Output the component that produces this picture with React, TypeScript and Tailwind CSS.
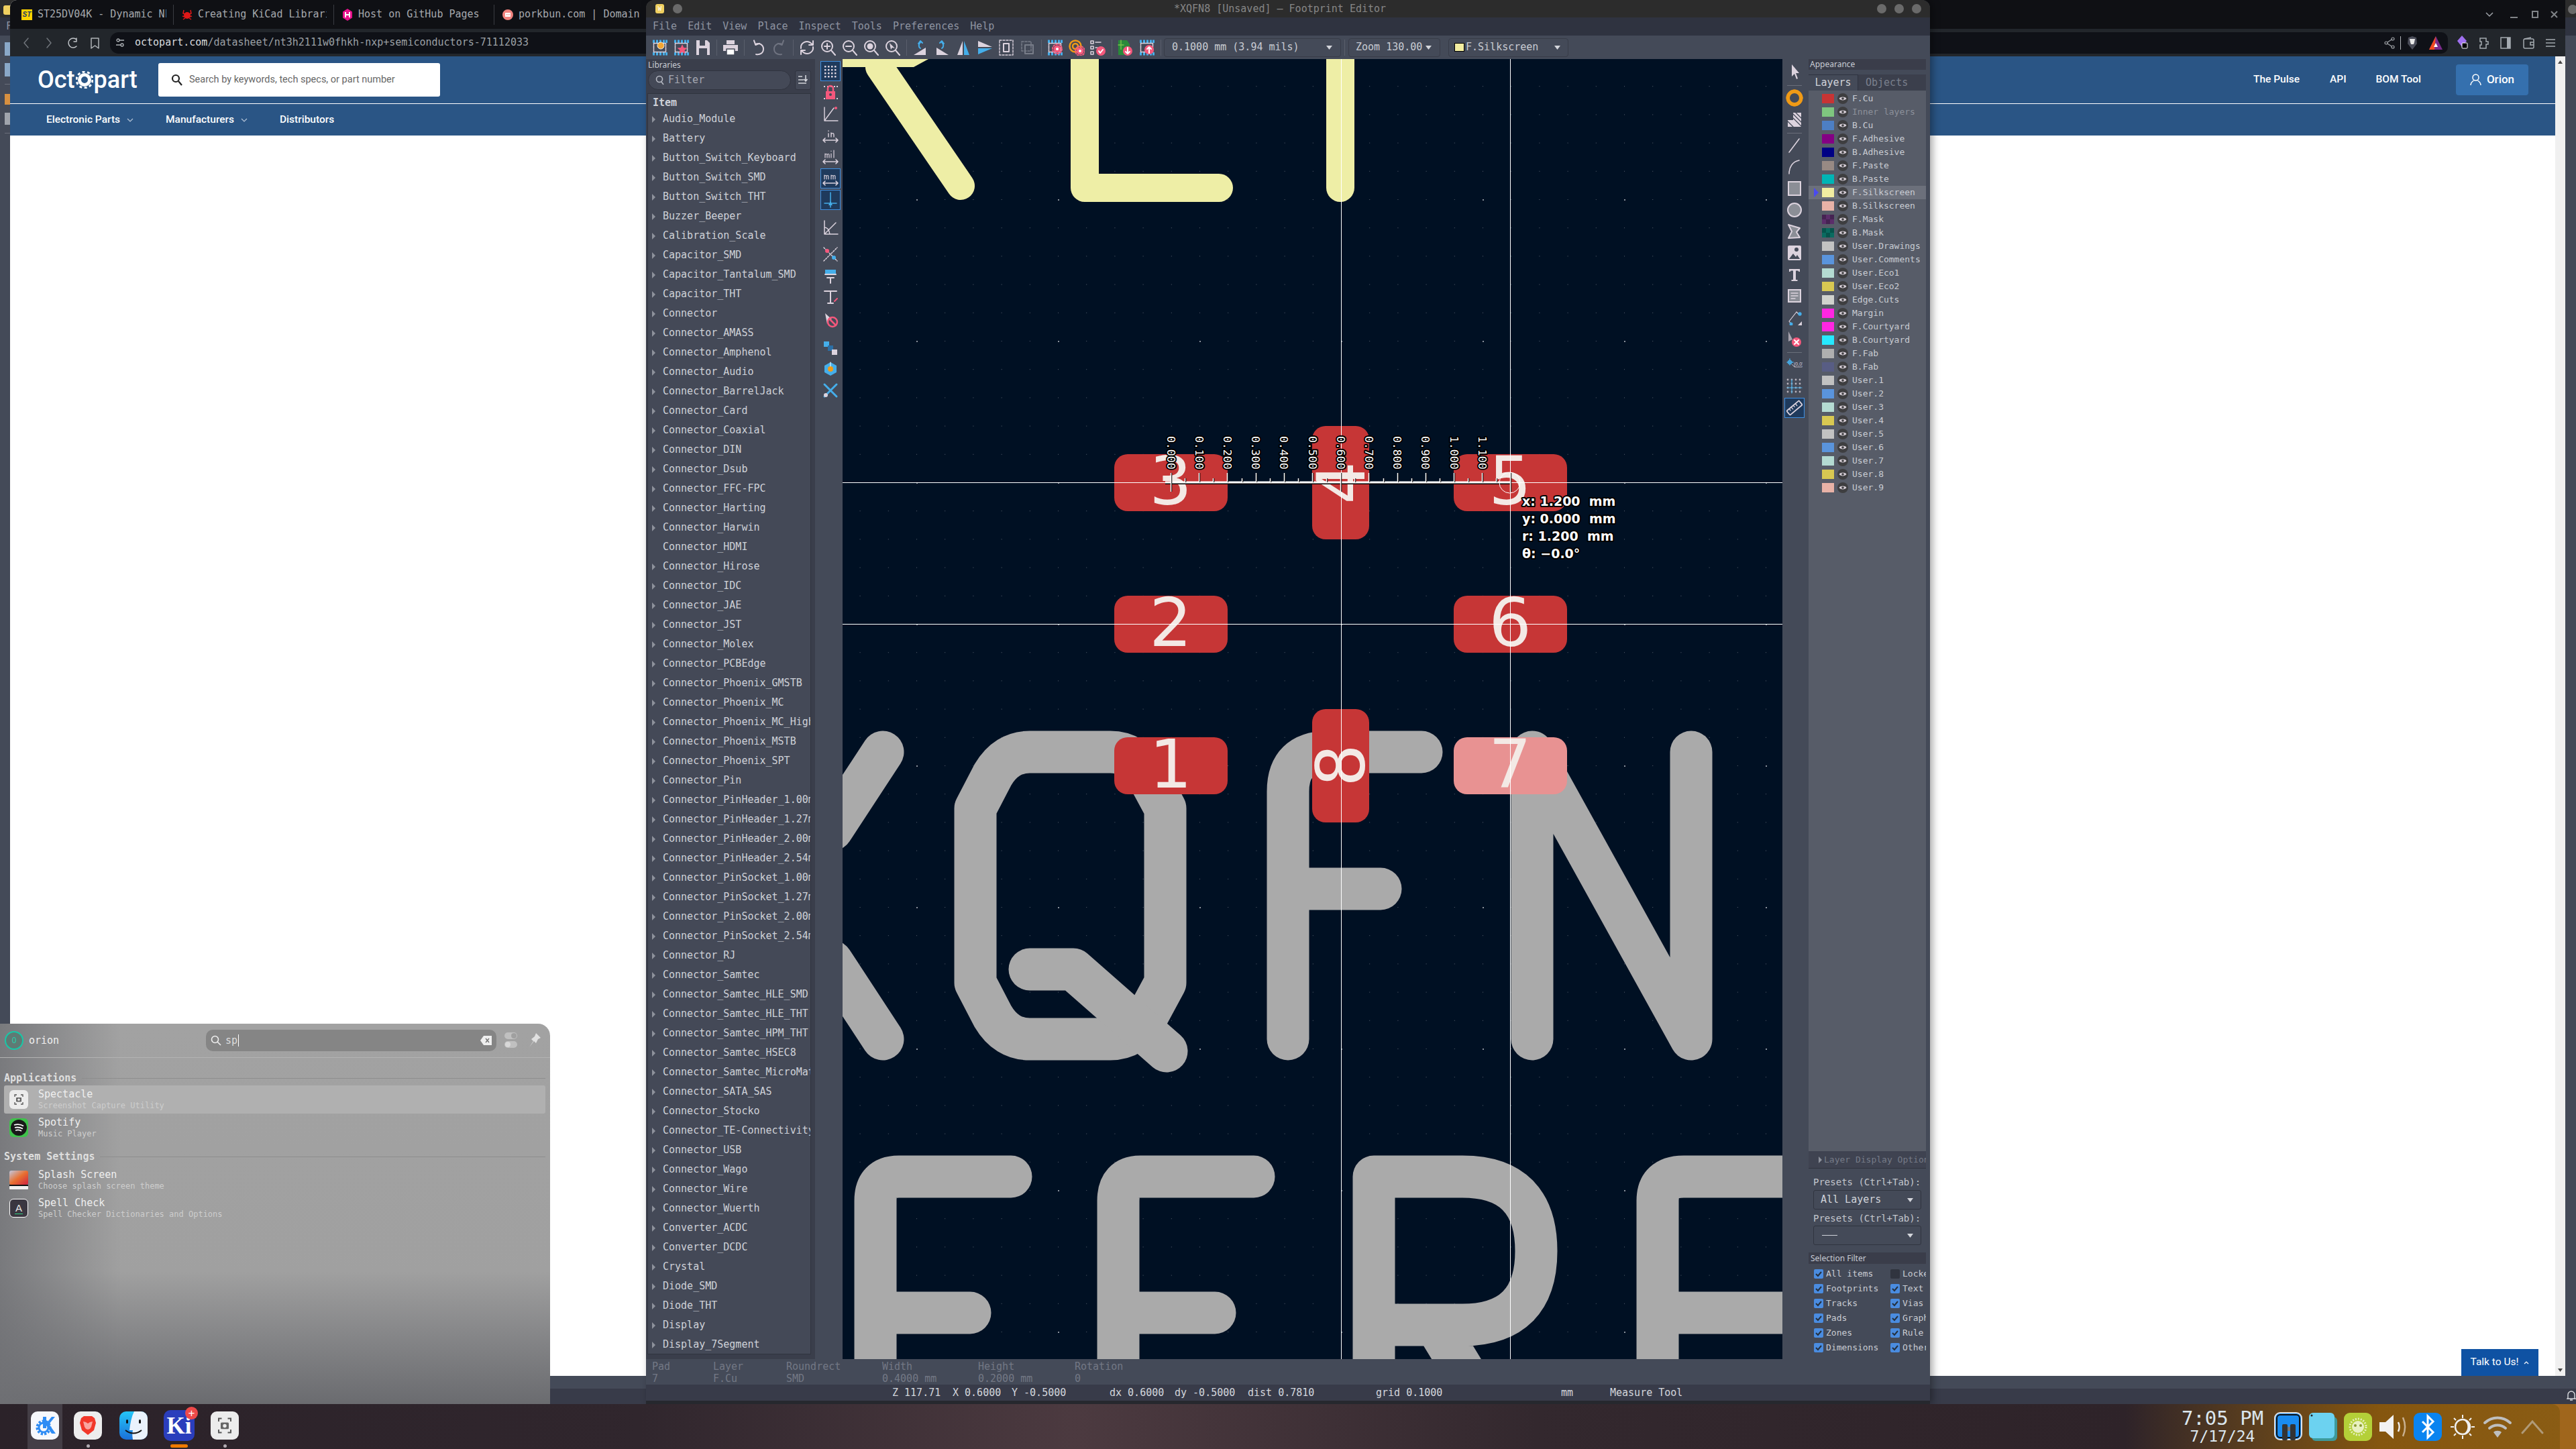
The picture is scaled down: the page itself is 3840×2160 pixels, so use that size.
import React from "react";

const S = "#dcd3de";
const B = "#45aeea";
const P = "#f4587c";

const Svg = ({ children, w = 24, h = 24, vb = "0 0 24 24" }: { children: React.ReactNode; w?: number; h?: number; vb?: string }) => (
  <svg width={w} height={h} viewBox={vb} fill="none" stroke={S} strokeWidth={2} strokeLinecap="round" strokeLinejoin="round">
    {children}
  </svg>
);

const ChipBase = () => (
  <g>
    {[1, 6, 11, 16, 20].map((x) => (
      <g key={x} stroke="none">
        <rect x={x} y={0.5} width={3} height={4.5} fill={B} />
        <rect x={x} y={19} width={3} height={4.5} fill={B} />
      </g>
    ))}
    <rect x={2.5} y={5.5} width={18} height={13} strokeWidth={1.5} strokeDasharray="5 1" />
  </g>
);

const Gear = ({ cx = 15, cy = 14, c = P }: { cx?: number; cy?: number; c?: string }) => (
  <g>
    <circle cx={cx} cy={cy} r={5.5} fill={c} stroke="none" />
    <circle cx={cx} cy={cy} r={7} stroke={c} strokeWidth={2} strokeDasharray="2 2.4" />
    <circle cx={cx} cy={cy} r={2} fill="#fff" stroke="none" />
  </g>
);

const Mag = ({ children }: { children?: React.ReactNode }) => (
  <Svg>
    <circle cx={10} cy={10} r={8} />
    <path d="M16 16l6 7" />
    {children}
  </Svg>
);

const topIcons: React.ReactNode[] = [
  <Svg key="a"><ChipBase /><circle cx={13} cy={9} r={5} fill="#f2a632" stroke="#fff" strokeWidth={1} strokeDasharray="1.5 1" /></Svg>,
  <Svg key="b"><ChipBase /><path d="M13 7l2.2 5 5.3.5-4 3.5 1.2 5.3-4.7-2.8-4.7 2.8 1.2-5.3-4-3.5 5.3-.5z" fill={P} stroke="none" /></Svg>,
  <Svg key="c"><path d="M2 1h16l4 4v18H2z" fill={S} stroke="none" /><rect x={7} y={1} width={8} height={8} fill="#444a58" stroke="none" /><rect x={6} y={13} width={12} height={10} fill="#444a58" stroke="none" /></Svg>,
  "|",
  <Svg key="d"><rect x={6} y={1} width={12} height={6} fill={S} stroke="none" /><path d="M1 8h22v9H1z" fill={S} stroke="none" /><rect x={6} y={14} width={12} height={9} fill="#fff" stroke="#444a58" strokeWidth={1.5} /></Svg>,
  "|",
  <Svg key="e"><path d="M8 7c6-3 12 1 12 7s-5 9-11 8" /><path d="M8 1v7h6" transform="rotate(-20 8 7)" /></Svg>,
  <Svg key="f"><g stroke="#6f7380"><path d="M16 7c-6-3-12 1-12 7s5 9 11 8" /><path d="M16 1v7h-6" transform="rotate(20 16 7)" /></g></Svg>,
  "|",
  <Svg key="g"><path d="M3 13C2 6 9 1 16 4l4 3" /><path d="M21 2v6h-6" /><path d="M21 11c1 7-6 12-13 9l-4-3" /><path d="M3 22v-6h6" /></Svg>,
  <Mag key="h"><path d="M10 6v8M6 10h8" /></Mag>,
  <Mag key="i"><path d="M6 10h8" /></Mag>,
  <Mag key="j"><circle cx={10} cy={10} r={4.5} fill={S} stroke="none" /></Mag>,
  <Mag key="k"><path d="M7 5l2 10 2-3 4 1z" fill={S} stroke="none" /></Mag>,
  "|",
  <Svg key="l"><path d="M2 23l18-11v11z" fill={S} stroke="none" /><path d="M12 13c-3-2-3-6 0-9M9 6l3-4 3 3" stroke={B} /></Svg>,
  <Svg key="m"><path d="M22 23L4 12v11z" fill={S} stroke="none" /><path d="M12 13c3-2 3-6 0-9M15 6l-3-4-3 3" stroke={B} /></Svg>,
  <Svg key="n"><path d="M11 2v21H3z" fill={S} stroke="none" /><path d="M13 2v21h8z" fill={B} stroke="none" /></Svg>,
  <Svg key="o"><path d="M2 11h21L2 2z" fill={S} stroke="none" /><path d="M2 13h21L2 22z" fill={B} stroke="none" /></Svg>,
  <Svg key="p"><rect x={2} y={1} width={20} height={22} strokeWidth={1.4} strokeDasharray="3 2" /><rect x={8} y={6} width={8} height={12} /></Svg>,
  <Svg key="q"><g stroke="#777c88"><rect x={3} y={3} width={14} height={14} strokeWidth={1.5} strokeDasharray="3 2" /><rect x={8} y={8} width={12} height={13} /></g></Svg>,
  "|",
  <Svg key="r"><ChipBase /><Gear /></Svg>,
  <Svg key="s"><circle cx={10} cy={10} r={8.5} stroke="#f09a16" strokeWidth={2.5} /><circle cx={10} cy={10} r={4} stroke="#f09a16" strokeWidth={2.5} /><Gear cx={17} cy={17} /></Svg>,
  <Svg key="t"><g strokeWidth={1.5}><rect x={1} y={2} width={4} height={4} /><rect x={1} y={10} width={4} height={4} /><rect x={1} y={18} width={4} height={4} /><path d="M8 4h8M8 12h3" /></g><circle cx={16} cy={17} r={7} fill={P} stroke="none" /><path d="M13 17l2 3 4-5" stroke="#fff" /></Svg>,
  "|",
  <Svg key="u"><path d="M1 1h13l4 6v8H1z" fill="#2a8a3a" stroke="none" /><path d="M1 8h8M5 1v20" stroke="#78c24a" strokeWidth={1.4} /><rect x={1} y={15} width={10} height={8} fill="#2a8a3a" stroke="none" /><circle cx={15} cy={17} r={7} fill={P} stroke="none" /><path d="M15 12v9M12 18l3 3 3-3" stroke="#fff" /></Svg>,
  <Svg key="v"><ChipBase /><circle cx={15} cy={15} r={7} fill={P} stroke="none" /><path d="M15 20v-9M12 14l3-3 3 3" stroke="#fff" /></Svg>,
  "|",
];

const leftTools: { n: React.ReactNode; on?: boolean; mt?: number }[] = [
  { on: true, n: <Svg><g fill={S} stroke="none">{[4, 9, 14, 19].flatMap((y) => [3, 8, 13, 18].map((x) => <rect key={x + "-" + y} x={x} y={y} width={2.5} height={2.5} />))}</g></Svg> },
  { n: <Svg><g fill={S} stroke="none">{[2, 20].flatMap((y) => [2, 7, 12, 17, 21].map((x) => <rect key={x + "-" + y} x={x} y={y} width={2} height={2} />))}</g><rect x={5} y={10} width={14} height={12} fill={P} stroke="none" /><path d="M8 10V6a4 4 0 018 0v4" stroke={P} strokeWidth={2.5} /><circle cx={12} cy={15} r={2} fill="#444a58" stroke="none" /></Svg> },
  { n: <Svg><path d="M3 2v20h20M3 22L17 3" strokeWidth={1.4} /><circle cx={20} cy={3} r={2} fill={P} stroke="none" /></Svg> },
  { n: <Svg><path d="M1 19h22M1 19l3-3M1 19l3 3M23 19l-3-3M23 19l-3 3" strokeWidth={1.6} /><path d="M9 14V9M9 5v.5M13 14V8M13 10c2-2 4-2 4 1v3" strokeWidth={1.4} /></Svg> },
  { n: <Svg><path d="M1 19h22M1 19l3-3M1 19l3 3M23 19l-3-3M23 19l-3 3" strokeWidth={1.6} /><path d="M4 13V7M4 9c1-2 3-2 3 0v4M7 9c1-2 3-2 3 0v4M13 13V7M13 3v.5M17 13V2" strokeWidth={1.2} /></Svg> },
  { on: true, n: <Svg><path d="M1 19h22M1 19l3-3M1 19l3 3M23 19l-3-3M23 19l-3 3" strokeWidth={1.6} /><path d="M3 13V7M3 9c1-2 3-2 3 0v4M6 9c1-2 3-2 3 0v4M13 13V7M13 9c1-2 3-2 3 0v4M16 9c1-2 3-2 3 0v4" strokeWidth={1.2} /></Svg> },
  { on: true, n: <Svg><path d="M12 1v22M3 17h18" stroke={B} strokeWidth={1.5} /><path d="M12 14l3 6H9z" fill={B} stroke="none" /></Svg> },
  { mt: 9, n: <Svg><path d="M3 2v20h20M3 22L20 5M3 12c4 0 7 4 8 10" strokeWidth={1.5} /></Svg> },
  { mt: 8, n: <Svg><g strokeWidth={1.5} strokeDasharray="2 2"><path d="M2 22L22 2M2 2l20 20" stroke={S} /></g><circle cx={7} cy={7} r={3} fill={P} stroke="none" /><circle cx={17} cy={17} r={3} fill={B} stroke="none" /></Svg> },
  { n: <Svg><g fill={B} stroke="none"><rect x={4} y={3} width={16} height={7} /></g><path d="M7 15h10M12 15v8M4 10h16" /></Svg> },
  { n: <Svg><path d="M3 3h18M12 3v18M8 21h8" /><path d="M18 18l4-4" stroke={P} /></Svg> },
  { mt: 2, n: <Svg><path d="M4 2l10 9-6 1-1 6z" fill={S} stroke="none" /><circle cx={15} cy={15} r={7} fill="none" stroke={P} strokeWidth={2.5} /><path d="M10 10l10 10" stroke={P} strokeWidth={2.5} /></Svg> },
  { mt: 9, n: <Svg><rect x={2} y={3} width={8} height={8} fill={B} stroke="none" /><rect x={8} y={9} width={8} height={8} fill="#2c6fa5" stroke="none" /><rect x={14} y={15} width={8} height={8} fill={S} stroke="none" /></Svg> },
  { n: <Svg><path d="M12 2l9 5v10l-9 5-9-5V7z" fill={B} stroke="none" /><circle cx={12} cy={12} r={4} fill="#f09a16" stroke="none" /><path d="M12 2v6" stroke="#fff" strokeWidth={1} /></Svg> },
  { n: <Svg><path d="M3 3l18 18M21 3L3 21" stroke={B} strokeWidth={3} /><circle cx={5} cy={19} r={3} fill={S} stroke="none" /></Svg> },
];

const rightTools: { n: React.ReactNode; sep?: boolean; on?: boolean }[] = [
  { n: <Svg><path d="M8 1l0 18 4-4 3 8 2-1-3-8h5z" fill={S} stroke="none" /></Svg> },
  { sep: true, n: null },
  { n: <Svg w={26} h={26}><circle cx={12} cy={12} r={9} stroke="#f09a16" strokeWidth={5} /><circle cx={12} cy={12} r={11.2} stroke="#f09a16" strokeWidth={0.8} /></Svg> },
  { n: <Svg><rect x={2} y={13} width={8} height={10} fill={S} stroke="none" /><rect x={10} y={2} width={12} height={21} fill={S} stroke="none" /><path d="M10 4l12 12M10 10l12 12M14 2l8 8M2 15l8 8" stroke="#444a58" strokeWidth={1.3} /></Svg> },
  { sep: true, n: null },
  { n: <Svg><path d="M4 22L19 2" strokeWidth={1.6} /></Svg> },
  { n: <Svg><path d="M4 22C4 12 9 4 19 2" strokeWidth={1.6} /></Svg> },
  { n: <Svg><rect x={3} y={2} width={18} height={20} fill="#8b8e96" stroke={S} strokeWidth={2} strokeLinejoin="miter" /></Svg> },
  { n: <Svg><circle cx={12} cy={12} r={10} fill="#8b8e96" stroke={S} strokeWidth={2} /></Svg> },
  { n: <Svg><path d="M3 2l17 5-5 6 5 8-17 1 5-10z" fill="#8b8e96" stroke={S} strokeWidth={2} /></Svg> },
  { n: <Svg><rect x={2} y={1} width={20} height={22} rx={2} fill={S} stroke="none" /><path d="M4 21l6-8 4 5 2-3 4 6z" fill="#444a58" stroke="none" /><circle cx={15} cy={7} r={3} fill="#444a58" stroke="none" /></Svg> },
  { n: <Svg><path d="M4 4h16v4h-1.5l-1-1.5H14V20h2.5v2h-9v-2H10V6.500H6.500l-1 1.500H4z" fill={S} stroke="none" /></Svg> },
  { n: <Svg><rect x={3} y={3} width={18} height={18} fill="#8b8e96" stroke={S} strokeWidth={2} strokeLinejoin="miter" /><path d="M7 8h10M7 12h10M7 16h6" stroke={S} strokeWidth={1.4} /></Svg> },
  { n: <Svg><path d="M4 18L15 4M15 4l4 4M4 18l3 4" strokeWidth={1.2} /><circle cx={20} cy={7} r={2.7} fill={B} stroke="none" /><circle cx={7} cy={22} r={2.5} fill={B} stroke="none" /><path d="M17 24l6-6v6z" fill={S} stroke="none" /></Svg> },
  { n: <Svg><path d="M3 1l0 15 6-3 3 6z" fill="#a8a3ae" stroke="none" /><circle cx={15} cy={17} r={7} fill={P} stroke="none" /><path d="M12 14l6 6M18 14l-6 6" stroke="#fff" strokeWidth={2} /></Svg> },
  { sep: true, n: null },
  { n: <Svg><path d="M1 8h9M5 3v9" stroke={B} strokeWidth={1.4} /><circle cx={5} cy={8} r={2.5} stroke={B} strokeWidth={1.4} /><path d="M8 11l4 4h11" strokeWidth={0.8} /><text x={11} y={13} fontSize={7} fill={S} stroke="none" fontFamily="'Liberation Sans',sans-serif">(0,0)</text></Svg> },
  { n: <Svg><g fill="#b8b2bc" stroke="none">{[2, 8, 14, 20].flatMap((y) => [2, 8, 14, 20].map((x) => <circle key={x + "-" + y} cx={x} cy={y} r={1.4} />))}</g><path d="M8 2v20M1 14h22" stroke={B} strokeWidth={1.2} /></Svg> },
  { on: true, n: <Svg><g transform="rotate(-40 12 12)"><rect x={0} y={8} width={24} height={8} rx={1} strokeWidth={1.8} /><path d="M5 8v3M9 8v4M13 8v3M17 8v4" strokeWidth={1.3} /></g></Svg> },
];

const libs = ["Audio_Module", "Battery", "Button_Switch_Keyboard", "Button_Switch_SMD", "Button_Switch_THT", "Buzzer_Beeper", "Calibration_Scale", "Capacitor_SMD", "Capacitor_Tantalum_SMD", "Capacitor_THT", "Connector", "Connector_AMASS", "Connector_Amphenol", "Connector_Audio", "Connector_BarrelJack", "Connector_Card", "Connector_Coaxial", "Connector_DIN", "Connector_Dsub", "Connector_FFC-FPC", "Connector_Harting", "Connector_Harwin", "Connector_HDMI", "Connector_Hirose", "Connector_IDC", "Connector_JAE", "Connector_JST", "Connector_Molex", "Connector_PCBEdge", "Connector_Phoenix_GMSTB", "Connector_Phoenix_MC", "Connector_Phoenix_MC_High", "Connector_Phoenix_MSTB", "Connector_Phoenix_SPT", "Connector_Pin", "Connector_PinHeader_1.00m", "Connector_PinHeader_1.27m", "Connector_PinHeader_2.00m", "Connector_PinHeader_2.54m", "Connector_PinSocket_1.00m", "Connector_PinSocket_1.27m", "Connector_PinSocket_2.00m", "Connector_PinSocket_2.54m", "Connector_RJ", "Connector_Samtec", "Connector_Samtec_HLE_SMD", "Connector_Samtec_HLE_THT", "Connector_Samtec_HPM_THT", "Connector_Samtec_HSEC8", "Connector_Samtec_MicroMate", "Connector_SATA_SAS", "Connector_Stocko", "Connector_TE-Connectivity", "Connector_USB", "Connector_Wago", "Connector_Wire", "Connector_Wuerth", "Converter_ACDC", "Converter_DCDC", "Crystal", "Diode_SMD", "Diode_THT", "Display", "Display_7Segment"];

const layers: [string, string][] = [["F.Cu", "#c83434"], ["Inner layers", "#7fc67f"], ["B.Cu", "#4d7fc4"], ["F.Adhesive", "#840084"], ["B.Adhesive", "#000084"], ["F.Paste", "#988a84"], ["B.Paste", "#00b5b5"], ["F.Silkscreen", "#f2eda1"], ["B.Silkscreen", "#e8b2a7"], ["F.Mask", "mask1"], ["B.Mask", "mask2"], ["User.Drawings", "#c2c2c2"], ["User.Comments", "#5a94dc"], ["User.Eco1", "#b4dbd2"], ["User.Eco2", "#d8c852"], ["Edge.Cuts", "#d0d2cd"], ["Margin", "#ff26e2"], ["F.Courtyard", "#ff26e2"], ["B.Courtyard", "#26e9ff"], ["F.Fab", "#afafaf"], ["B.Fab", "#585d84"], ["User.1", "#c2c2c2"], ["User.2", "#5a94dc"], ["User.3", "#b4dbd2"], ["User.4", "#d8c852"], ["User.5", "#c2c2c2"], ["User.6", "#5a94dc"], ["User.7", "#b4dbd2"], ["User.8", "#d8c852"], ["User.9", "#e8b2a7"]];

const Eye = () => (
  <svg width={16} height={16} viewBox="0 0 16 16" className="shrink-0">
    <circle cx={8} cy={8} r={8} fill="#3e3e40" />
    <path d="M2.500 8C4.500 4.800 11.500 4.800 13.500 8 11.500 11.200 4.500 11.200 2.500 8z" fill="#d6ced6" />
    <circle cx={8} cy={8} r={1.8} fill="#3e3e40" />
  </svg>
);

const Caret = ({ c = "#d4d6dc" }: { c?: string }) => (
  <svg width={9} height={6} viewBox="0 0 9 6" className="shrink-0"><path d="M0 0h9L4.500 6z" fill={c} /></svg>
);

const Swatch = ({ c }: { c: string }) => {
  if (c === "mask1" || c === "mask2") {
    const a = c === "mask1" ? "#5b2d6a" : "#0a6b60";
    const b = c === "mask1" ? "#452352" : "#07544c";
    return (
      <svg width={18} height={14} className="shrink-0"><rect width={18} height={14} fill={a} /><rect x={0} y={0} width={6} height={7} fill={b} /><rect x={12} y={0} width={6} height={7} fill={b} /><rect x={6} y={7} width={6} height={7} fill={b} /></svg>
    );
  }
  return <span className="block h-[14px] w-[18px] shrink-0" style={{ background: c }} />;
};

const Check = ({ on = true }: { on?: boolean }) => (
  <svg width={14} height={14} viewBox="0 0 14 14" className="shrink-0">
    <rect width={14} height={14} rx={2} fill={on ? "#4a8ce0" : "#30343f"} />
    {on && <path d="M3 7l3 3 5-6" fill="none" stroke="#24303f" strokeWidth={2} />}
  </svg>
);

const filt: [string, boolean, string, boolean][] = [["All items", true, "Locked items", false], ["Footprints", true, "Text", true], ["Tracks", true, "Vias", true], ["Pads", true, "Graphics", true], ["Zones", true, "Rule Areas", true], ["Dimensions", true, "Other items", true]];

const Canvas = () => {
  const ux = 42.2;
  const x0 = 1745;
  const pad = "#c63636";
  const ticks = Array.from({ length: 25 }, (_, i) => i);
  const labels = Array.from({ length: 12 }, (_, i) => i);
  const digit = (t: string, x: number, y: number, rot = 0) => (
    <text x={x} y={y} textAnchor="middle" dominantBaseline="central" fontSize={100} fill="#f3e9e5" fontFamily="'DejaVu Sans',sans-serif" transform={rot ? `rotate(${rot} ${x} ${y})` : undefined}>{t}</text>
  );
  const outline = { paintOrder: "stroke" as const, stroke: "#000", strokeWidth: 4, strokeLinejoin: "round" as const };
  return (
    <svg width={1401} height={1938} viewBox="1256 88 1401 1938" className="block">
      <defs>
        <pattern id="g1" patternUnits="userSpaceOnUse" x={1999} y={719} width={ux} height={ux}>
          <rect width={1} height={1} fill="#56606c" />
        </pattern>
        <pattern id="g2" patternUnits="userSpaceOnUse" x={1999} y={719} width={ux * 5} height={ux * 5}>
          <rect width={2} height={2} fill="#8a929c" />
        </pattern>
      </defs>
      <rect x={1256} y={88} width={1401} height={1938} fill="#001023" />
      <rect x={1256} y={88} width={1401} height={1938} fill="url(#g1)" />
      <rect x={1256} y={88} width={1401} height={1938} fill="url(#g2)" />

      <g fill="none" stroke="#aaaaaa" strokeWidth={63} strokeLinecap="round" strokeLinejoin="round">
        <path d="M1316 1121L1240 1237M1316 1549L1240 1433" />
        <path d="M1535 1121H1655Q1690 1121 1710 1155L1737 1205V1465L1710 1515Q1690 1549 1655 1549H1535Q1500 1549 1480 1515L1454 1465V1205L1480 1155Q1500 1121 1535 1121Z" />
        <path d="M1535 1445H1600L1739 1567" />
        <path d="M1920 1549V1180Q1920 1121 1980 1121H2119M1920 1325H2058" />
        <path d="M2284 1549V1121L2521 1549V1121" />
        <path d="M1305 2080V1790Q1305 1754 1340 1754H1507M1305 1957H1446" />
        <path d="M1667 2080V1790Q1667 1754 1700 1754H1869M1667 1957H1811" />
        <path d="M2048 2080V1754H2180Q2290 1754 2290 1865Q2290 1975 2180 1975H2048M2140 1975L2210 2090" />
        <path d="M2471 2080V1790Q2471 1754 2510 1754H2700M2471 1957H2700" />
      </g>
      <g fill="none" stroke="#eeeea6" strokeWidth={42} strokeLinecap="round" strokeLinejoin="round">
        <path d="M1311 100L1432 277" />
        <path d="M1617 70V280H1817" />
        <path d="M1998 70V280" />
      </g>
      <path d="M1256 88H1384L1362 100H1256Z" fill="#eeeea6" />

      <g fill={pad}>
        <rect x={1661} y={677} width={169} height={85} rx={20} />
        <rect x={2167} y={677} width={169} height={85} rx={20} />
        <rect x={1956} y={635} width={85} height={169} rx={20} />
        <rect x={1661} y={888} width={169} height={85} rx={20} />
        <rect x={2167} y={888} width={169} height={85} rx={20} />
        <rect x={1661} y={1099} width={169} height={85} rx={20} />
        <rect x={1956} y={1057} width={85} height={169} rx={20} />
      </g>
      <rect x={2167} y={1099} width={169} height={85} rx={20} fill="#e89292" />
      {digit("3", 1745, 717)}
      {digit("5", 2251, 717)}
      {digit("4", 1999, 720, -90)}
      {digit("2", 1745, 928)}
      {digit("6", 2251, 928)}
      {digit("1", 1745, 1139)}
      {digit("7", 2251, 1139)}
      {digit("8", 1999, 1141, -90)}

      <g stroke="#fff" strokeWidth={1}>
        <path d="M1256 719.500H2657M1256 930.500H2657M1999.500 88V2026M2251.500 88V2026" />
      </g>

      <path d="M1737 721H2251" stroke="#000" strokeWidth={2} />
      <path d="M1737 719H2251" stroke="#fff" strokeWidth={3} />
      {ticks.map((i) => {
        const x = Math.round(x0 + i * ux / 2) + 0.5;
        const big = i % 12 === 0;
        const maj = i % 2 === 0;
        return (
          <g key={i}>
            <path d={`M${x + 1} ${maj ? 705 : 713}V${big ? 733 : 719}`} stroke="#000" strokeWidth={1.5} />
            <path d={`M${x} ${maj ? 705 : 713}V${big ? 733 : 719}`} stroke="#fff" strokeWidth={1.5} />
          </g>
        );
      })}
      {labels.map((i) => {
        const x = x0 + i * ux;
        const t = (i / 10).toFixed(3);
        return (
          <text key={i} x={x} y={650} fontSize={16.500} fill="#fff" dominantBaseline="central" fontFamily="'DejaVu Sans Mono',monospace" transform={`rotate(90 ${x} 650)`} style={outline}>{t}</text>
        );
      })}
      <circle cx={2250.500} cy={719.500} r={15.500} fill="none" stroke="#fff" strokeWidth={1} />
      {["x: 1.200  mm", "y: 0.000  mm", "r: 1.200  mm", "θ: −0.0°"].map((t, i) => (
        <text key={t} x={2269} y={[747, 773, 799, 825][i]} fontSize={19} fontWeight={700} xmlSpace="preserve" fill="#fff" dominantBaseline="central" fontFamily="'DejaVu Sans',sans-serif" style={outline}>{t}</text>
      ))}
    </svg>
  );
};

const KiCadWindow = () => (
  <div className="absolute left-[963px] top-0 z-20 flex h-[2093px] w-[1914px] flex-col overflow-hidden rounded-t-[12px] bg-[#353946] text-[15px] shadow-[4px_0_12px_rgba(0,0,0,0.35)]">
    <div className="relative flex h-[26px] shrink-0 items-center bg-[#2c2c2c] pl-[14px]">
      <span className="flex h-[14px] w-[13px] items-center justify-center rounded-[3px] bg-[#f0d060] text-[9px] leading-none text-[#fff]">W</span>
      <span className="ml-[13px] h-[14px] w-[14px] rounded-full bg-[#6a6a6a]" />
      <span className="absolute left-[787px] text-[#868686]">*XQFN8 [Unsaved] — Footprint Editor</span>
      <div className="ml-auto flex gap-[12px] pr-[13px]">
        <span className="h-[14px] w-[14px] rounded-full bg-[#6a6a6a]" />
        <span className="h-[14px] w-[14px] rounded-full bg-[#6a6a6a]" />
        <span className="h-[14px] w-[14px] rounded-full bg-[#6a6a6a]" />
      </div>
    </div>
    <div className="flex h-[27px] shrink-0 items-center gap-[16px] bg-[#2f3340] pl-[10px] text-[#8e93a0]">
      {["File", "Edit", "View", "Place", "Inspect", "Tools", "Preferences", "Help"].map((m) => (
        <span key={m}>{m}</span>
      ))}
    </div>
    <div className="flex h-[35px] shrink-0 items-center bg-[#444a58] pl-[5px] text-[#c8cbd2]">
      {topIcons.map((n, i) =>
        n === "|" ? (
          <span key={i} className="flex w-[9px] justify-center"><span className="h-[24px] w-px bg-[#5a5f6c]" /></span>
        ) : (
          <span key={i} className="flex w-[32px] justify-center">{n}</span>
        )
      )}
      <div className="flex h-[28px] w-[264px] items-center justify-between rounded-[4px] border border-[#383c48] pl-[11px] pr-[12px]">
        <span>0.1000 mm (3.94 mils)</span><Caret />
      </div>
      <span className="flex w-[11px] justify-center"><span className="h-[24px] w-px bg-[#5a5f6c]" /></span>
      <div className="flex h-[28px] w-[137px] items-center gap-[5px] rounded-[4px] border border-[#383c48] pl-[10px]">
        <span>Zoom 130.00</span><Caret />
      </div>
      <div className="ml-[12px] flex h-[28px] w-[179px] items-center rounded-[4px] border border-[#383c48] pl-[8px] pr-[11px]">
        <span className="h-[13px] w-[15px] border border-black bg-[#f2eda1]" />
        <span className="ml-[2px]">F.Silkscreen</span>
        <span className="ml-auto"><Caret /></span>
      </div>
    </div>

    <div className="flex h-[1938px] shrink-0">
      <div className="flex w-[252px] shrink-0 flex-col bg-[#3a3e4b] pl-[2px] pr-[6px]">
        <div className="flex h-[17px] shrink-0 items-center pl-[1px] font-['Noto_Sans',sans-serif] text-[12px] text-[#c8ccd4]">Libraries</div>
        <div className="flex h-[29px] shrink-0 items-center gap-[6px] pl-px">
          <div className="flex h-full w-[214px] items-center gap-[6px] rounded-full border border-[#30343f] bg-[#444957] pl-[10px] text-[#a4a8b2]">
            <svg width={13} height={15} viewBox="0 0 13 15" fill="none" stroke="#b8bbc4" strokeWidth={1.6}><circle cx={6} cy={6} r={4.500} /><path d="M9 10l3 4" /></svg>
            <span>Filter</span>
          </div>
          <div className="flex h-full w-[24px] items-center justify-center rounded-[3px] border border-[#30343f] bg-[#444957]">
            <svg width={14} height={18} viewBox="0 0 14 18" fill="none" stroke="#d4d6dc" strokeWidth={1.6}><path d="M0 3h6M0 8h8M0 13h12M11 1v9M8.500 7l2.500 3 2.500-3" /></svg>
          </div>
        </div>
        <div className="mb-[7px] mt-[5px] flex min-h-0 flex-1 flex-col overflow-hidden border border-[#30343f] bg-[#444957] pl-[6px] pt-[3px] text-[#ced1d8]">
          <div className="flex h-[20px] shrink-0 items-center pl-px font-bold">Item</div>
          <div className="flex flex-col">
            {libs.map((l) => (
              <div key={l} className="flex h-[29px] shrink-0 items-center whitespace-nowrap">
                <span className="w-[16px] shrink-0">
                  {l !== "Connector_HDMI" && <svg width={5} height={10} viewBox="0 0 5 10"><path d="M0 0l5 5-5 5z" fill="#8e929c" /></svg>}
                </span>
                <span>{l}</span>
              </div>
            ))}
          </div>
        </div>
      </div>

      <div className="flex w-[41px] shrink-0 flex-col items-center bg-[#444a58] pl-[4px] pt-[3px]">
        {leftTools.map((t, i) => (
          <span
            key={i}
            className={t.on ? "flex h-[30px] w-[30px] shrink-0 items-center justify-center border border-[#3f8fe0] bg-[#1f3a5c]" : "flex h-[30px] w-[30px] shrink-0 items-center justify-center"}
            style={{ marginBottom: 2, marginTop: t.mt ?? 0 }}
          >
            {t.n}
          </span>
        ))}
      </div>

      <div className="h-full w-[1401px] shrink-0 overflow-hidden"><Canvas /></div>

      <div className="flex w-[39px] shrink-0 flex-col items-center bg-[#444a58] pr-[4px] pt-[4px]">
        {rightTools.map((t, i) =>
          t.sep ? (
            <span key={i} className="my-[3px] block h-px w-[22px] shrink-0 bg-[#6a6f7b]" />
          ) : (
            <span key={i} className={t.on ? "flex h-[30px] w-[30px] shrink-0 items-center justify-center border border-[#3f8fe0] bg-[#1f3a5c]" : "flex h-[30px] w-[30px] shrink-0 items-center justify-center"} style={{ marginBottom: 2 }}>
              {t.n}
            </span>
          )
        )}
      </div>

      <div className="flex w-[181px] shrink-0 flex-col bg-[#444a58] pr-[6px]">
        <div className="flex h-[16px] shrink-0 items-center bg-[#3a3d4a] pl-[2px] font-['Noto_Sans',sans-serif] text-[12px] text-[#c8ccd4]">Appearance</div>
        <div className="mt-[7px] flex h-[24px] shrink-0 items-center bg-[#3b3f4c]">
          <span className="flex h-full w-[74px] items-center justify-center border-r border-t border-[#2f3340] bg-[#444a58] text-[#d0d3da]">Layers</span>
          <span className="pl-[11px] text-[#7a7f8c]">Objects</span>
        </div>
        <div className="flex min-h-0 flex-1 flex-col overflow-hidden bg-[#575c68] pt-[2px] text-[13px] text-[#c9ccd3]">
          {layers.map(([n, c]) => {
            const sel = n === "F.Silkscreen";
            return (
              <div key={n} className={sel ? "flex h-[20px] shrink-0 items-center gap-[5px] bg-[#6c707b]" : "flex h-[20px] shrink-0 items-center gap-[5px]"}>
                <span className="flex w-[15px] shrink-0 justify-end">
                  {sel && <svg width={7} height={14} viewBox="0 0 7 14"><path d="M0 0l7 7-7 7z" fill="#4a4af0" /></svg>}
                </span>
                <Swatch c={c} />
                <Eye />
                <span className={n === "Inner layers" ? "ml-[1px] whitespace-nowrap text-[#8c909a]" : "ml-[1px] whitespace-nowrap"}>{n}</span>
              </div>
            );
          })}
        </div>
        <div className="flex h-[26px] shrink-0 items-center gap-[3px] overflow-hidden whitespace-nowrap border-b border-[#30343f] bg-[#3f4351] pl-[15px] text-[13px] text-[#767b88]">
          <svg width={5} height={10} viewBox="0 0 5 10" className="shrink-0"><path d="M0 0l5 5-5 5z" fill="#8e929c" /></svg>
          <span>Layer Display Options</span>
        </div>
        <div className="flex shrink-0 flex-col px-[7px] pt-[12px] text-[#c3c6cd]">
          <span className="text-[14px] leading-[16px]">Presets (Ctrl+Tab):</span>
          <div className="mt-[4px] flex h-[29px] items-center justify-between rounded-[3px] border border-[#30343f] pl-[10px] pr-[11px] text-[#d0d3da]">
            <span>All Layers</span><Caret />
          </div>
          <span className="mt-[5px] text-[14px] leading-[16px]">Presets (Ctrl+Tab):</span>
          <div className="mt-[3px] flex h-[29px] items-center justify-between rounded-[3px] border border-[#30343f] pl-[12px] pr-[11px]">
            <span className="h-px w-[23px] bg-[#d0d3da]" /><Caret />
          </div>
        </div>
        <div className="mt-[11px] flex h-[17px] shrink-0 items-center bg-[#3a3d4a] pl-[3px] font-['Noto_Sans',sans-serif] text-[12px] text-[#c8ccd4]">Selection Filter</div>
        <div className="grid h-[142px] shrink-0 grid-cols-[114px_1fr] content-start overflow-hidden pl-[8px] pt-[4px] text-[13px] text-[#c9ccd3]">
          {filt.map((r) => (
            <React.Fragment key={r[0]}>
              <div className="flex h-[22px] items-center gap-[4px] whitespace-nowrap"><Check on={r[1]} /><span>{r[0]}</span></div>
              <div className="flex h-[22px] items-center gap-[4px] overflow-hidden whitespace-nowrap"><Check on={r[3]} /><span>{r[2]}</span></div>
            </React.Fragment>
          ))}
        </div>
      </div>
    </div>

    <div className="flex h-[38px] shrink-0 bg-[#444a58] pl-[9px] pt-[2px] text-[#737885]">
      {[["Pad", "7", 91], ["Layer", "F.Cu", 109], ["Roundrect", "SMD", 143], ["Width", "0.4000 mm", 143], ["Height", "0.2000 mm", 144], ["Rotation", "0", 100]].map(([a, b, w]) => (
        <div key={a as string} className="flex flex-col" style={{ width: w as number }}>
          <span className="h-[19px] leading-[19px]">{a}</span>
          <span className="h-[17px] leading-[17px]">{b}</span>
        </div>
      ))}
    </div>
    <div className="flex h-[24px] shrink-0 items-center bg-[#383b49] pl-[367px] text-[#d3d6dc]">
      {[["Z 117.71", 90], ["X 0.6000", 88], ["Y -0.5000", 146], ["dx 0.6000", 97], ["dy -0.5000", 109], ["dist 0.7810", 191], ["grid 0.1000", 276], ["mm", 73], ["Measure Tool", 120]].map(([t, w]) => (
        <span key={t as string} className="whitespace-nowrap" style={{ width: w as number }}>{t}</span>
      ))}
    </div>
    <div className="h-[5px] shrink-0 bg-[#26282e]" />
  </div>
);

const OctoGear = () => (
  <svg width={26} height={26} viewBox="0 0 26 26" className="mx-[1px] shrink-0">
    <circle cx={13} cy={13} r={7.500} fill="none" stroke="#fff" strokeWidth={5} />
    <circle cx={13} cy={13} r={12} fill="none" stroke="#fff" strokeWidth={3} strokeDasharray="4 3.540" />
  </svg>
);

const TabIcon = ({ kind }: { kind: number }) => {
  if (kind === 0)
    return <span className="flex h-[16px] w-[16px] shrink-0 items-center justify-center bg-[#ffd200] font-['Liberation_Sans',sans-serif] text-[10px] font-bold italic leading-none text-[#1a3a6a]">ST</span>;
  if (kind === 1)
    return (
      <svg width={16} height={20} viewBox="0 0 16 20" className="shrink-0"><ellipse cx={8} cy={11} rx={5} ry={5} fill="#e01818" /><path d="M3 3l-1 5 3 1M13 3l1 5-3 1M1 12l3 1M15 12l-3 1M2 17l3-2M14 17l-3-2" stroke="#e01818" strokeWidth={1.5} fill="none" /></svg>
    );
  if (kind === 2)
    return (
      <svg width={16} height={20} viewBox="0 0 16 20" className="shrink-0"><path d="M8 1l7 4.500v9L8 19l-7-4.500v-9z" fill="#e8108c" /><path d="M5 6v8M11 6v8M5 10h6" stroke="#fff" strokeWidth={2} /></svg>
    );
  return <svg width={16} height={16} viewBox="0 0 16 16" className="shrink-0"><circle cx={8} cy={8} r={8} fill="#f0837e" /><rect x={4} y={5} width={8} height={6} fill="#fff" /><rect x={6} y={7} width={1.500} height={1.500} fill="#f0837e" /><rect x={9} y={7} width={1.500} height={1.500} fill="#f0837e" /></svg>;
};

const Browser = () => (
  <div className="absolute left-[15px] top-0 z-10 flex h-[2051px] w-[3809px] flex-col overflow-hidden rounded-tl-[10px] bg-white">
    <div className="relative flex h-[43px] shrink-0 items-center bg-[#0f1014] pl-[5px] font-['DejaVu_Sans_Mono',monospace] text-[15px] text-[#a5a8ad]">
      {["ST25DV04K - Dynamic NF", "Creating KiCad Librari", "Host on GitHub Pages", "porkbun.com | Domain name"].map((t, i) => (
        <div key={t} className="flex h-[30px] w-[239px] shrink-0 items-center gap-[8px] overflow-hidden whitespace-nowrap border-r border-[#3a3c42] pl-[12px] pr-[10px]">
          <TabIcon kind={i} />
          <span className="min-w-0 overflow-hidden">{t}</span>
        </div>
      ))}
      <div className="absolute right-[0px] flex items-center">
        <svg width={16} height={10} viewBox="0 0 16 10" className="mr-[23px]" fill="none" stroke="#9ea2a8" strokeWidth={1.500}><path d="M3 2l5 5 5-5" /></svg>
        <span className="mr-[21px] mt-[8px] h-[2px] w-[11px] bg-[#808488]" />
        <span className="mr-[18px] h-[11px] w-[10px] border-2 border-[#808488]" />
        <svg width={11} height={11} viewBox="0 0 11 11" className="mr-[11px]" stroke="#808488" strokeWidth={2}><path d="M1 1l9 9M10 1l-9 9" /></svg>
      </div>
    </div>
    <div className="flex h-[41px] shrink-0 items-center bg-[#22262b]">
      <div className="flex w-[149px] shrink-0 items-center font-['DejaVu_Sans_Mono',monospace] text-[#b0b4b8]">
        <svg width={149} height={20} viewBox="0 0 149 20" fill="none" stroke="#70757b" strokeWidth={1.500} strokeLinecap="round" strokeLinejoin="round">
          <path d="M27 3l-6 7 6 7M55 3l6 7-6 7" />
          <g stroke="#c0c4c8"><path d="M99 5a7 7 0 100 10M99 3v5h-4" /><path d="M121 3h11v15l-5.500-4-5.500 4z" stroke="#b0b4b8" /></g>
        </svg>
      </div>
      <div className="flex h-[32px] w-[3485px] shrink-0 items-center rounded-l-[13px] rounded-r-[10px] bg-[#0f1117] pr-[8px] font-['DejaVu_Sans_Mono',monospace] text-[15px]">
        <svg width={14} height={16} viewBox="0 0 14 16" className="ml-[8px] shrink-0" fill="none" stroke="#b0b4b8" strokeWidth={1.300}><circle cx={4} cy={4} r={2} /><path d="M6 4h7M1 11h7" /><circle cx={10} cy={11} r={2} /></svg>
        <span className="ml-[15px] text-[#d8dade]">octopart.com</span>
        <span className="text-[#9ba0a5]">/datasheet/nt3h2111w0fhkh-nxp+semiconductors-71112033</span>
        <div className="ml-auto flex items-center">
          <svg width={16} height={20} viewBox="0 0 16 20" fill="none" stroke="#a0a4a8" strokeWidth={1.200}><circle cx={3} cy={10} r={2} /><circle cx={13} cy={4} r={2} /><circle cx={13} cy={16} r={2} /><path d="M5 9l6-4M5 11l6 4" /></svg>
          <span className="mx-[8px] h-[20px] w-px bg-[#b0b4b8]" />
          <svg width={16} height={22} viewBox="0 0 16 22" className="ml-[1px]"><path d="M2 3l6-2 6 2 1 9-7 9-7-9z" fill="#4a4c58" /><path d="M4 5h8l-1 5-1 3H6l-1-3z" fill="#e8e8e8" /></svg>
          <svg width={20} height={20} viewBox="0 0 20 20" className="ml-[17px]"><path d="M10 0l10 20H0z" fill="#7a2a8a" /><path d="M10 0L0 20h8z" fill="#f04a20" /><path d="M10 10l3 6H7z" fill="#fff" /></svg>
        </div>
      </div>
      <div className="flex flex-1 items-center justify-start">
        <svg width={18} height={24} viewBox="0 0 18 24" className="ml-[13px]"><path d="M8 1l7 8-7 9-7-9z" fill="#a070f0" /><rect x={8} y={12} width={8} height={8} rx={1} fill="#000" stroke="#fff" /></svg>
        <svg width={16} height={20} viewBox="0 0 16 20" fill="none" stroke="#a4aab0" strokeWidth={1.500} className="ml-[15px]"><path d="M2 3h9v5h3v4h-3v6H2v-5h2V8H2z" /></svg>
        <svg width={16} height={18} viewBox="0 0 16 18" className="ml-[16px]"><rect x={1} y={1} width={14} height={16} fill="none" stroke="#a4aab0" strokeWidth={1.500} /><rect x={10} y={1} width={5} height={16} fill="#a4aab0" /></svg>
        <svg width={17} height={18} viewBox="0 0 17 18" className="ml-[18px]" fill="none" stroke="#a4aab0" strokeWidth={1.500}><rect x={1} y={3} width={15} height={14} rx={2} /><path d="M16 8h-5v4h5M2 3l10-2" /></svg>
        <svg width={14} height={14} viewBox="0 0 14 14" className="ml-[17px]" stroke="#a4aab0" strokeWidth={1.500}><path d="M0 2h14M0 7h14M0 12h14" /></svg>
      </div>
    </div>
    <div className="flex min-h-0 flex-1">
      <div className="relative flex min-w-0 flex-1 flex-col font-['Roboto',sans-serif]">
        <div className="flex h-[70px] shrink-0 items-center bg-[#2a5585] pl-[41px] pr-[40px] text-white">
          <div className="flex w-[150px] items-center whitespace-nowrap text-[36px] font-medium leading-none">
            <span>Oct</span><OctoGear /><span>part</span>
          </div>
          <div className="ml-[30px] flex h-[50px] w-[420px] items-center rounded-[3px] bg-white pl-[19px]">
            <svg width={18} height={18} viewBox="0 0 18 18" fill="none" stroke="#222" strokeWidth={2.200}><circle cx={7} cy={7} r={5} /><path d="M11 11l5 6" /></svg>
            <span className="ml-[9px] text-[14.500px] text-[#676767]">Search by keywords, tech specs, or part number</span>
          </div>
          <div className="ml-auto flex items-center text-[15.500px] font-medium">
            <span>The Pulse</span>
            <span className="ml-[45px]">API</span>
            <span className="ml-[44px]">BOM Tool</span>
            <div className="ml-[52px] flex h-[46px] w-[108px] items-center justify-center gap-[8px] rounded-[4px] bg-[#3570ae] text-[17px]">
              <svg width={17} height={18} viewBox="0 0 17 18" fill="none" stroke="#fff" strokeWidth={1.500}><circle cx={8.500} cy={5.500} r={4.500} /><path d="M1 17c0-4 3-6 4.500-7M16 17c0-4-3-6-4.500-7" /></svg>
              <span>Orion</span>
            </div>
          </div>
        </div>
        <div className="h-px shrink-0 bg-white" />
        <div className="flex h-[47px] shrink-0 items-center bg-[#2a5585] pl-[54px] text-[15.500px] font-medium text-white">
          <span>Electronic Parts</span>
          <svg width={10} height={6} viewBox="0 0 10 6" className="ml-[10px]" fill="none" stroke="#b4c4d8" strokeWidth={1.200}><path d="M1 1l4 4 4-4" /></svg>
          <span className="ml-[48px]">Manufacturers</span>
          <svg width={10} height={6} viewBox="0 0 10 6" className="ml-[10px]" fill="none" stroke="#b4c4d8" strokeWidth={1.200}><path d="M1 1l4 4 4-4" /></svg>
          <span className="ml-[48px]">Distributors</span>
        </div>
        <div className="relative flex-1 bg-white">
          <div className="absolute bottom-0 right-[25px] flex h-[40px] w-[115px] items-center justify-center gap-[8px] bg-[#0f52a3] text-[15.500px] text-white">
            <span>Talk to Us!</span>
            <svg width={8} height={5} viewBox="0 0 8 5" fill="none" stroke="#fff" strokeWidth={1.200}><path d="M1 4l3-3 3 3" /></svg>
          </div>
        </div>
      </div>
      <div className="flex w-[15px] shrink-0 flex-col items-center justify-between bg-[#f0f0f0] py-[6px]">
        <svg width={7} height={5} viewBox="0 0 7 5"><path d="M3.500 0L7 5H0z" fill="#444" /></svg>
        <svg width={7} height={5} viewBox="0 0 7 5"><path d="M3.500 5L7 0H0z" fill="#444" /></svg>
      </div>
    </div>
  </div>
);

const BackWindow = () => (
  <div className="absolute left-0 top-0 flex h-[2093px] w-full flex-col bg-[#444a58]">
    <div className="relative h-[26px] shrink-0 bg-[#2c2c2c]">
      <span className="absolute left-[5px] top-[8px] h-[14px] w-[13px] rounded-[3px] bg-[#f0d060]" />
      <span className="absolute right-[-2px] top-[7px] h-[14px] w-[14px] rounded-full bg-[#6a6a6a]" />
    </div>
    <div className="flex h-[27px] shrink-0 items-center bg-[#2f3340] pl-[9px] font-['DejaVu_Sans_Mono',monospace] text-[15px] text-[#8e93a0]">F</div>
    <div className="flex flex-1 flex-col pl-[7px] pt-[10px]">
      <span className="block h-[20px] w-[8px] bg-[#8aa8c8]" />
      <span className="mt-[11px] block h-[20px] w-[8px] bg-[#8aa8c8]" />
      <span className="mt-[11px] block h-px w-[8px] bg-[#6a6f7b]" />
      <span className="mt-[14px] block h-[16px] w-[8px] bg-[#d89040]" />
      <span className="mt-[12px] block h-[18px] w-[8px] bg-[#a0a4ac]" />
      <span className="mt-[12px] block h-px w-[8px] bg-[#6a6f7b]" />
    </div>
    <div className="h-[23px] shrink-0 bg-[#383b49]">
      <svg width={14} height={16} viewBox="0 0 14 16" className="ml-auto mr-0 mt-[2px]" fill="none" stroke="#d8dade" strokeWidth={1.400}><path d="M2 12V7a5 5 0 0110 0v5l1 1H1zM5 15h4" /></svg>
    </div>
  </div>
);

const AppRow = ({ icon, title, sub, on }: { icon: React.ReactNode; title: string; sub: string; on?: boolean }) => (
  <div className={on ? "flex h-[42px] shrink-0 items-center rounded-[3px] bg-[#b0b0b0] pl-[8px]" : "flex h-[42px] shrink-0 items-center pl-[8px]"}>
    <span className="flex h-[28px] w-[28px] shrink-0 items-center justify-center">{icon}</span>
    <div className="ml-[15px] flex flex-col">
      <span className="text-[15px] leading-[18px] text-[#efefef]">{title}</span>
      <span className="text-[12px] leading-[16px] text-[#cdcdcd]">{sub}</span>
    </div>
  </div>
);

const Section = ({ t }: { t: string }) => (
  <div className="flex h-[22px] shrink-0 items-center gap-[8px]">
    <span className="text-[15px] font-bold text-[#dedede]">{t}</span>
    <span className="h-px flex-1 bg-[#8e8e8e]" />
  </div>
);

const CamIcon = ({ s = 28 }: { s?: number }) => (
  <svg width={s} height={s} viewBox="0 0 28 28">
    <rect width={28} height={28} rx={6} fill="#ececec" />
    <path d="M8 10V7h3M20 10V7h-3M8 18v3h3M20 18v3h-3" fill="none" stroke="#555" strokeWidth={1.300} />
    <rect x={10} y={11} width={8} height={6.500} rx={1} fill="#666" />
    <circle cx={14} cy={14.300} r={1.800} fill="#ececec" />
  </svg>
);

const Launcher = () => (
  <div className="absolute left-0 top-[1526px] z-30 flex h-[568px] w-[820px] flex-col overflow-hidden rounded-tr-[18px] bg-linear-to-b from-[#a2a2a2] via-[#a0a0a0] via-65% to-[#6a6b6f] font-['DejaVu_Sans_Mono',monospace]">
    <div className="absolute inset-y-0 left-0 w-[180px] bg-linear-to-r from-[#6f7074]/80 to-transparent" />
    <div className="relative flex h-[51px] shrink-0 items-center border-b border-[#b2b2b2] pl-[7px]">
      <span className="flex h-[28px] w-[28px] items-center justify-center rounded-full border-2 border-[#18c8a8] bg-[#5f7a74] text-[12px] text-[#2cc8a8]">O</span>
      <span className="ml-[8px] w-[45px] text-[15px] text-[#efefef]">orion</span>
      <div className="ml-[219px] flex h-[32px] w-[433px] items-center rounded-[10px] bg-[#858585]">
        <svg width={16} height={16} viewBox="0 0 16 16" className="ml-[7px]" fill="none" stroke="#efefef" strokeWidth={1.600}><circle cx={6.500} cy={6.500} r={5} /><path d="M10 10l5 5" /></svg>
        <span className="ml-[6px] text-[15px] text-[#dcdcdc]">sp</span>
        <span className="ml-px h-[18px] w-px bg-white" />
        <svg width={17} height={14} viewBox="0 0 17 14" className="ml-auto mr-[7px]"><path d="M5 0h12v14H5L0 7z" fill="#efefef" /><path d="M8 4l5 6M13 4l-5 6" stroke="#777" strokeWidth={1.500} /></svg>
      </div>
      <svg width={19} height={24} viewBox="0 0 19 24" className="ml-[12px]"><rect width={19} height={10} rx={5} fill="#c0c0c0" /><circle cx={14} cy={5} r={4} fill="#a0a0a0" /><rect y={13} width={19} height={10} rx={5} fill="#c0c0c0" /><circle cx={5} cy={18} r={4} fill="#d8d8d8" /></svg>
      <svg width={18} height={22} viewBox="0 0 18 22" className="ml-[17px]"><path d="M11 0l7 7-4 2-3 6-3-3-7 9 6-9-3-3 5-4z" fill="#e0e0e0" /></svg>
    </div>
    <div className="relative flex flex-col pl-[6px] pr-[7px] pt-[19px]">
      <Section t="Applications" />
      <AppRow on title="Spectacle" sub="Screenshot Capture Utility" icon={<CamIcon />} />
      <AppRow title="Spotify" sub="Music Player" icon={
        <svg width={28} height={28} viewBox="0 0 28 28"><rect width={28} height={28} rx={6} fill="#3ec24a" /><circle cx={14} cy={14} r={12} fill="#191919" /><path d="M7 10c5-1.500 10-1 14 1.500M8 14c4-1 8-.5 12 1.500M9 18c3-.8 7-.4 9 1" fill="none" stroke="#fff" strokeWidth={1.800} /></svg>
      } />
      <div className="h-[11px] shrink-0" />
      <Section t="System Settings" />
      <div className="h-[3px] shrink-0" />
      <AppRow title="Splash Screen" sub="Choose splash screen theme" icon={
        <svg width={28} height={28} viewBox="0 0 28 28"><defs><linearGradient id="sp" x1="0" y1="0" x2="1" y2="1"><stop offset="0" stopColor="#c0c8e0" /><stop offset="0.5" stopColor="#e87030" /><stop offset="1" stopColor="#d02040" /></linearGradient></defs><rect width={28} height={21} rx={3} fill="url(#sp)" /><rect y={21} width={28} height={2} fill="#111" /><rect y={23} width={28} height={5} rx={1} fill="#f0f0f0" /></svg>
      } />
      <AppRow title="Spell Check" sub="Spell Checker Dictionaries and Options" icon={
        <span className="flex h-[28px] w-[28px] flex-col items-center justify-center rounded-[6px] border border-white bg-[#3a3640] font-['Liberation_Sans',sans-serif] text-[15px] leading-[16px] text-[#e8e8e8]">A<span className="h-px w-[12px] bg-[#30d080]" /></span>
      } />
    </div>
  </div>
);

const DockIcon = ({ ml, children, dot, bar, hi }: { ml: number; children: React.ReactNode; dot?: boolean; bar?: boolean; hi?: boolean }) => (
  <div className={hi ? "relative flex h-full w-[52px] shrink-0 items-start justify-center bg-[#443e46] pt-[11px]" : "relative flex h-full shrink-0 items-start justify-center pt-[11px]"} style={{ marginLeft: ml }}>
    {children}
    {dot && <span className="absolute bottom-[2px] h-[5px] w-[5px] rounded-full bg-[#b0aab0]" />}
    {bar && <span className="absolute bottom-[2px] h-[5px] w-[26px] rounded-full bg-[#f07a00]" />}
  </div>
);

const Tray = ({ children }: { children: React.ReactNode }) => (
  <span className="flex w-[52px] shrink-0 items-center justify-center">{children}</span>
);

const Dock = () => (
  <div className="absolute bottom-0 left-0 z-40 flex h-[67px] w-full bg-[#a0661c]">
    <div className="flex flex-1 items-stretch rounded-tr-[12px] bg-[linear-gradient(90deg,#2b2229_0%,#30262d_25%,#4c3a40_42%,#33282e_60%,#2e2329_83%,#5a3e1e_88%,#85560f_93%,#8a5c14_100%)] pr-[15px]">
      <DockIcon ml={41} hi>
        <svg width={42} height={42} viewBox="0 0 42 42"><rect width={42} height={42} rx={10} fill="#f6f8fc" /><circle cx={19} cy={24} r={9} fill="none" stroke="#2e8cf4" strokeWidth={5} strokeDasharray="3 2" /><circle cx={19} cy={24} r={7} fill="none" stroke="#2e8cf4" strokeWidth={3} /><path d="M18 8h5v10l8-10h5l-9 11 10 14h-6l-8-12v4h-5z" fill="#2e8cf4" /></svg>
      </DockIcon>
      <DockIcon ml={17} dot>
        <svg width={42} height={42} viewBox="0 0 42 42"><rect width={42} height={42} rx={10} fill="#ededed" /><path d="M11 10l4-3h12l4 3 2 7-3 11-9 7-9-7-3-11z" fill="#f2382a" /><path d="M14 15l4 1 3 2 3-2 4-1-2 8-2 3-3 1-3-1-2-3z" fill="#fff" opacity={0.55} /></svg>
      </DockIcon>
      <DockIcon ml={26}>
        <svg width={42} height={42} viewBox="0 0 42 42"><defs><linearGradient id="fnd" x1="0" y1="0" x2="0" y2="1"><stop offset="0" stopColor="#25c6f8" /><stop offset="1" stopColor="#1a70d8" /></linearGradient></defs><rect width={42} height={42} rx={10} fill="url(#fnd)" /><path d="M22 0h10a10 10 0 0110 10v22a10 10 0 01-10 10H20c-1-6-1-10 0-14h-5c1-10 3-20 7-28z" fill="#eaf2fc" /><rect x={10} y={12} width={3} height={6} rx={1.500} fill="#111" /><rect x={29} y={12} width={3} height={6} rx={1.500} fill="#111" /><path d="M9 28c7 6 17 6 24 0" fill="none" stroke="#111" strokeWidth={1.800} /></svg>
      </DockIcon>
      <DockIcon ml={24} bar>
        <div className="relative -mt-[2px] flex h-[46px] w-[46px] items-center justify-center rounded-[10px] bg-[#2a3ebc] font-['Liberation_Serif',serif] text-[35px] font-bold leading-none text-white">
          Ki
          <span className="absolute -right-[5px] -top-[5px] flex h-[19px] w-[19px] items-center justify-center rounded-full bg-[#ee4a4a] font-['Liberation_Sans',sans-serif] text-[17px] font-normal leading-none">+</span>
        </div>
      </DockIcon>
      <DockIcon ml={24} dot>
        <CamIcon s={42} />
      </DockIcon>
      <div className="ml-auto flex w-[130px] flex-col items-center pt-[6px] font-['DejaVu_Sans_Mono',monospace] text-[#dbe6ee]">
        <span className="text-[29px] leading-[30px]">7:05 PM</span>
        <span className="text-[23px] leading-[24px]">7/17/24</span>
      </div>
      <div className="ml-[7px] flex items-center pr-[0px]">
        <Tray>
          <svg width={42} height={44} viewBox="0 0 42 44"><rect x={1} y={1} width={40} height={40} rx={8} fill="#1a8cf0" stroke="#e0e0e0" strokeWidth={2} /><rect x={4} y={4} width={34} height={34} rx={5} fill="#1a8cf0" stroke="#111" strokeWidth={2} /><rect x={12} y={18} width={8} height={24} rx={2} fill="#333" /><rect x={24} y={18} width={8} height={24} rx={2} fill="#333" /><rect x={20} y={22} width={4} height={6} fill="#777" /></svg>
        </Tray>
        <Tray>
          <svg width={42} height={42} viewBox="0 0 42 42"><rect x={4} y={6} width={38} height={36} rx={6} fill="#3d9a9a" /><rect width={38} height={38} rx={6} fill="#6cd2f0" /><circle cx={4} cy={4} r={1.500} fill="#222" /></svg>
        </Tray>
        <Tray>
          <svg width={42} height={42} viewBox="0 0 42 42"><rect width={42} height={42} rx={9} fill="#b4d038" /><circle cx={21} cy={21} r={9} fill="#e8f0c0" /><circle cx={21} cy={21} r={12} fill="none" stroke="#e8f0c0" strokeWidth={3} strokeDasharray="2 2" /><circle cx={17} cy={19} r={2} fill="#8a9a30" /><circle cx={25} cy={19} r={2} fill="#8a9a30" /></svg>
        </Tray>
        <Tray>
          <svg width={42} height={42} viewBox="0 0 42 42"><path d="M1 14h9L22 3v36L10 28H1z" fill="#f2f2f2" /><path d="M29 14c2 4 2 10 0 14" fill="none" stroke="#f2f2f2" strokeWidth={2.500} /><path d="M36 7c4 9 4 19 0 28" fill="none" stroke="#c8b090" strokeWidth={2.500} /></svg>
        </Tray>
        <Tray>
          <svg width={42} height={42} viewBox="0 0 42 42"><rect width={42} height={42} rx={9} fill="#0a84f0" /><path d="M13 13l16 16-8 8V5l8 8-16 16" fill="none" stroke="#fff" strokeWidth={3} /></svg>
        </Tray>
        <Tray>
          <svg width={42} height={42} viewBox="0 0 42 42" fill="none" stroke="#f0f0f0" strokeWidth={2}><circle cx={21} cy={21} r={11} strokeWidth={2.500} /><path d="M21 3v5M21 34v5M3 21h5M34 21h5M8 8l3 3M31 31l3 3M8 34l3-3M31 11l3-3" /><path d="M23 11a10 10 0 010 20 12 12 0 000-20z" fill="#f0f0f0" stroke="none" /></svg>
        </Tray>
        <Tray>
          <svg width={44} height={34} viewBox="0 0 44 34" fill="none" stroke="#bfbfbf" strokeWidth={4} strokeLinecap="round"><path d="M3 11c11-10 27-10 38 0M10 19c7-6 17-6 24 0" /><path d="M16 25l6 8 6-8c-3-3-9-3-12 0z" fill="#bfbfbf" stroke="none" /></svg>
        </Tray>
        <Tray>
          <svg width={34} height={22} viewBox="0 0 34 22" fill="none" stroke="#b09a78" strokeWidth={3} strokeLinecap="round"><path d="M2 20L17 3l15 17" /></svg>
        </Tray>
      </div>
    </div>
    <div className="w-[24px] shrink-0" />
  </div>
);

export default function App() {
  return (
    <div className="relative h-[2160px] w-[3840px] overflow-hidden bg-[#2b2229] font-['DejaVu_Sans_Mono',monospace]">
      <BackWindow />
      <Browser />
      <KiCadWindow />
      <Launcher />
      <Dock />
    </div>
  );
}
